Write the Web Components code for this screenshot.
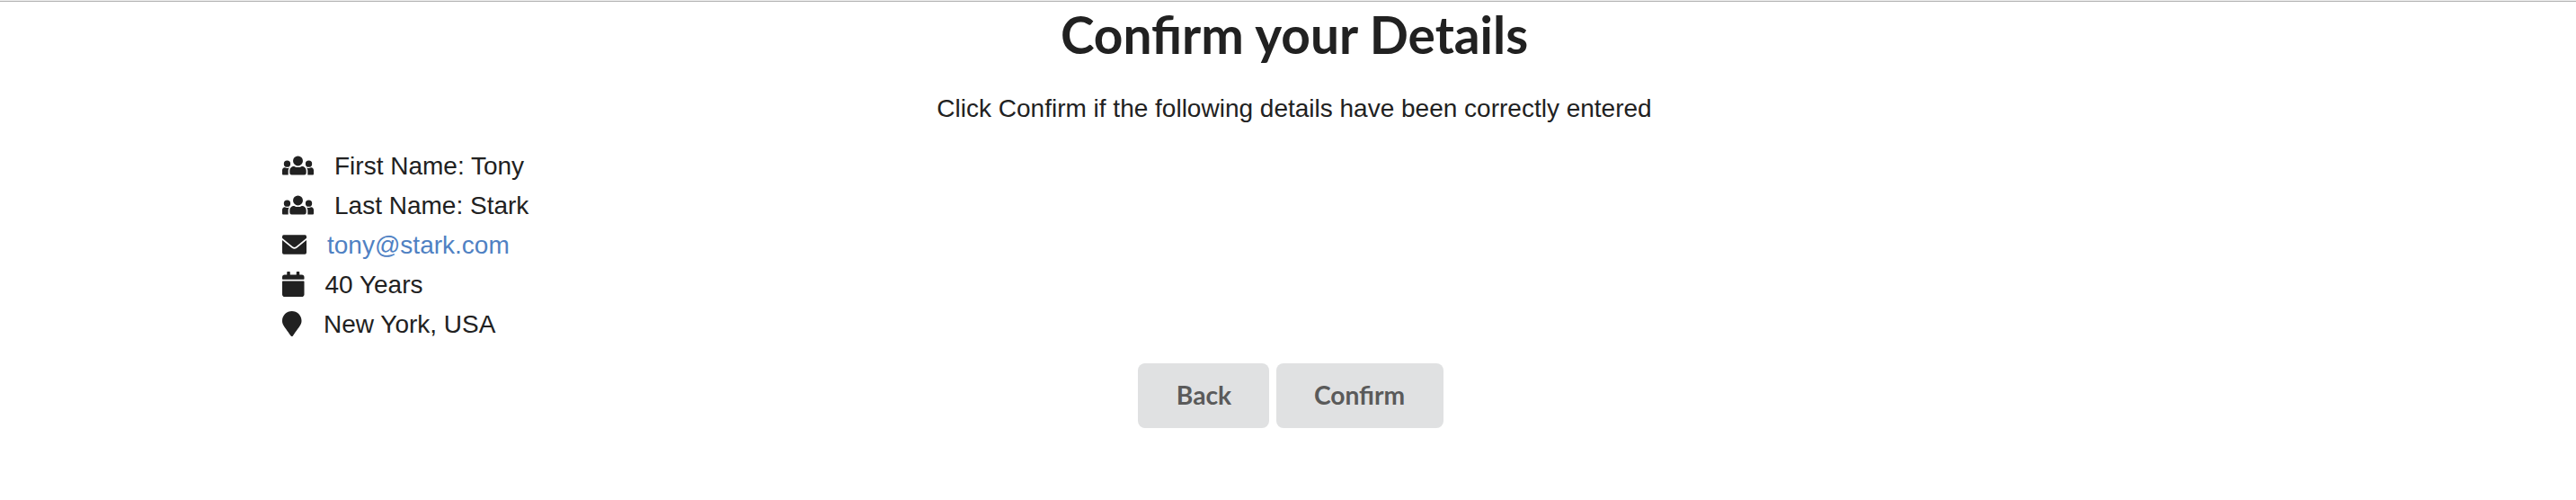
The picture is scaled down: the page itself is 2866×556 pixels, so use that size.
<!DOCTYPE html>
<html lang="en"><head><meta charset="utf-8"><title>Confirm</title><style>body{margin:0;background:#fff}</style></head><body>
<confirm-page></confirm-page>
<script>
const icons={
users:['0 0 640 512','M320 64a100 100 0 1 1 0 200a100 100 0 0 1 0-200zM100 156a67 67 0 1 1 0 134a67 67 0 0 1 0-134zM540 156a67 67 0 1 1 0 134a67 67 0 0 1 0-134zM244 272c44 30 108 30 152 0c55 0 92 38 92 88v48q0 40-40 40H192q-40 0-40-40v-48c0-50 37-88 92-88zM52 298c30 17 66 18 94 2c-17 22-24 40-24 65v83H18q-18 0-18-18v-72c0-32 20-56 52-60zM588 298c-30 17-66 18-94 2c17 22 24 40 24 65v83h104q18 0 18-18v-72c0-32-20-56-52-60z',35,23],
mail:['0 0 512 512','M30 60H482q30 0 30 30v35L292 296q-36 26-72 0L0 125V90q0-30 30-30zM0 165L204 323q52 38 104 0L512 165V418q0 34-34 34H34q-34 0-34-34z',27,23],
calendar:['0 0 448 512','M12 192h424c6.600 0 12 5.400 12 12v260c0 26.500-21.500 48-48 48H48c-26.500 0-48-21.500-48-48V204c0-6.600 5.400-12 12-12zm436-44v-36c0-26.500-21.500-48-48-48h-48V12c0-6.600-5.400-12-12-12h-40c-6.600 0-12 5.400-12 12v52H160V12c0-6.600-5.400-12-12-12h-40c-6.600 0-12 5.400-12 12v52H48C21.500 64 0 85.500 0 112v36c0 6.600 5.400 12 12 12h424c6.600 0 12-5.400 12-12z',24.5,23],
marker:['0 0 384 512','M172.300 501.700C27 291 0 269.400 0 192 0 86 86 0 192 0s192 86 192 192c0 77.400-27 99-172.300 309.700-9.500 13.800-29.900 13.800-39.400 0z',21.5,24.5]};
class DetailRow extends HTMLElement{constructor(){super();const [v,p,w,g]=icons[this.getAttribute('icon')];this.attachShadow({mode:'open'}).innerHTML=`<style>:host{display:flex;align-items:center;height:44px;color:#212121;font:28px "Liberation Sans",Arial,sans-serif}svg{width:${w}px;height:28px;fill:#212121;margin:0 ${g}px 1px 0;flex:none}span{white-space:nowrap;padding-top:2px}</style><svg viewBox="${v}" preserveAspectRatio="none"><path d="${p}"/></svg><span><slot></slot></span>`}}
class AppButton extends HTMLElement{constructor(){super();this.attachShadow({mode:'open'}).innerHTML=`<style>:host{display:block}button{display:block;border:0;border-radius:8px;background:#e0e1e2;color:#5a5a5a;font:bold 28.200px/28px Lato,sans-serif;width:var(--button-width);height:72px;padding:var(--label-padding)}</style><button><slot></slot></button>`}}
class ConfirmPage extends HTMLElement{constructor(){super();this.attachShadow({mode:'open'}).innerHTML=`<style>:host{display:block;box-sizing:border-box;height:556px;border-top:1px solid #eee;color:#212121;text-align:center;font:28px "Liberation Sans",Arial,sans-serif}h1{margin:0;border-top:1px solid #b3b3b3;font:bold 56.800px/72px Lato,sans-serif;padding:0 0 2px 14px}p{margin:28px 0 0;padding-left:14px;line-height:34px}.list{margin:24px 0 0 314px;text-align:left}.actions{display:flex;justify-content:center;gap:8px;margin-top:22px;padding-left:6px}.back{--button-width:146px;--label-padding:0 0 2px 1px}.confirm{--button-width:186px;--label-padding:0 1px 2px 0}a{color:#4f81c3}</style><h1>Confirm your Details</h1><p>Click Confirm if the following details have been correctly entered</p><div class="list"><detail-row icon="users">First Name: Tony</detail-row><detail-row icon="users">Last Name: Stark</detail-row><detail-row icon="mail"><a>tony@stark.com</a></detail-row><detail-row icon="calendar">40 Years</detail-row><detail-row icon="marker">New York, USA</detail-row></div><div class="actions"><app-button class="back">Back</app-button><app-button class="confirm">Confirm</app-button></div>`}}
customElements.define('detail-row',DetailRow);customElements.define('app-button',AppButton);customElements.define('confirm-page',ConfirmPage);
</script></body></html>
